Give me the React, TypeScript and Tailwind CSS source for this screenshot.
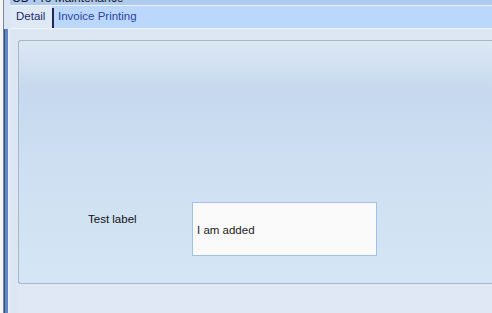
export default function App() {
  const font = { fontFamily: '"Liberation Sans", Arial, sans-serif' };

  return (
    <div className="flex h-[313px] w-[492px] overflow-hidden bg-[#dde7f3]" style={font}>
      {/* window edge */}
      <div className="w-[3px] bg-[#f4f5f7]" />
      <div className="w-[1px] bg-[#7c8796]" />
      <div className="flex w-[6px] flex-col">
        <div className="h-[29px] bg-[#dbe6f4]" />
        <div className="flex flex-1">
          <div className="w-[1px] bg-[#3d4e6e]" />
          <div className="w-[3px] bg-[#5f86cc]" />
          <div className="w-[2px] bg-[#e6edf7]" />
        </div>
      </div>

      <div className="flex flex-1 flex-col">
        {/* title bar, mostly cut off by the window */}
        <div className="h-[5px] overflow-hidden bg-[#afcaef]">
          <div className="mt-[-9px] pl-[2px] text-[12px] leading-[14px] text-[#1a1a2a]">
            CD Pro Maintenance
          </div>
        </div>
        <div className="h-[1px] bg-[#eef3fa]" />

        {/* tabs */}
        <div className="flex h-[22px] items-stretch bg-[#bbd7fb] text-[11.5px]">
          <div className="flex w-[42px] items-center bg-[#dfe9f6] pl-[6px] text-[#1c2c6e]">
            Detail
          </div>
          <div className="mt-[2px] w-[2px] bg-[#1d2a4c]" />
          <div className="flex items-center pl-[4px] text-[#2b45a2]">
            Invoice Printing
          </div>
        </div>
        <div className="h-[1px] bg-[#f2f5f9]" />

        {/* page */}
        <div className="flex flex-1 flex-col pl-[8px] pt-[11px]">
          <div className="h-[244px] rounded-l-[3px] border-y border-l border-[#a7b6c8] bg-[linear-gradient(to_bottom,#dde8f4_0px,#c6d8ee_50px,#cddff1_120px,#d5e5f5_100%)]">
            <div className="flex pt-[161px]">
              <div className="ml-[69px] w-[104px] pt-[11px] text-[11.5px] leading-[13px] text-[#111]">
                Test label
              </div>
              <div className="h-[54px] w-[185px] border border-[#a3c0e6] bg-[#fafafa] pl-[4px] pt-[21px] text-[11.5px] leading-[13px] text-[#1a1a1a]">
                I am added
              </div>
            </div>
          </div>
          <div className="flex-1 bg-[#dfe8f4]" />
        </div>
      </div>
    </div>
  );
}
